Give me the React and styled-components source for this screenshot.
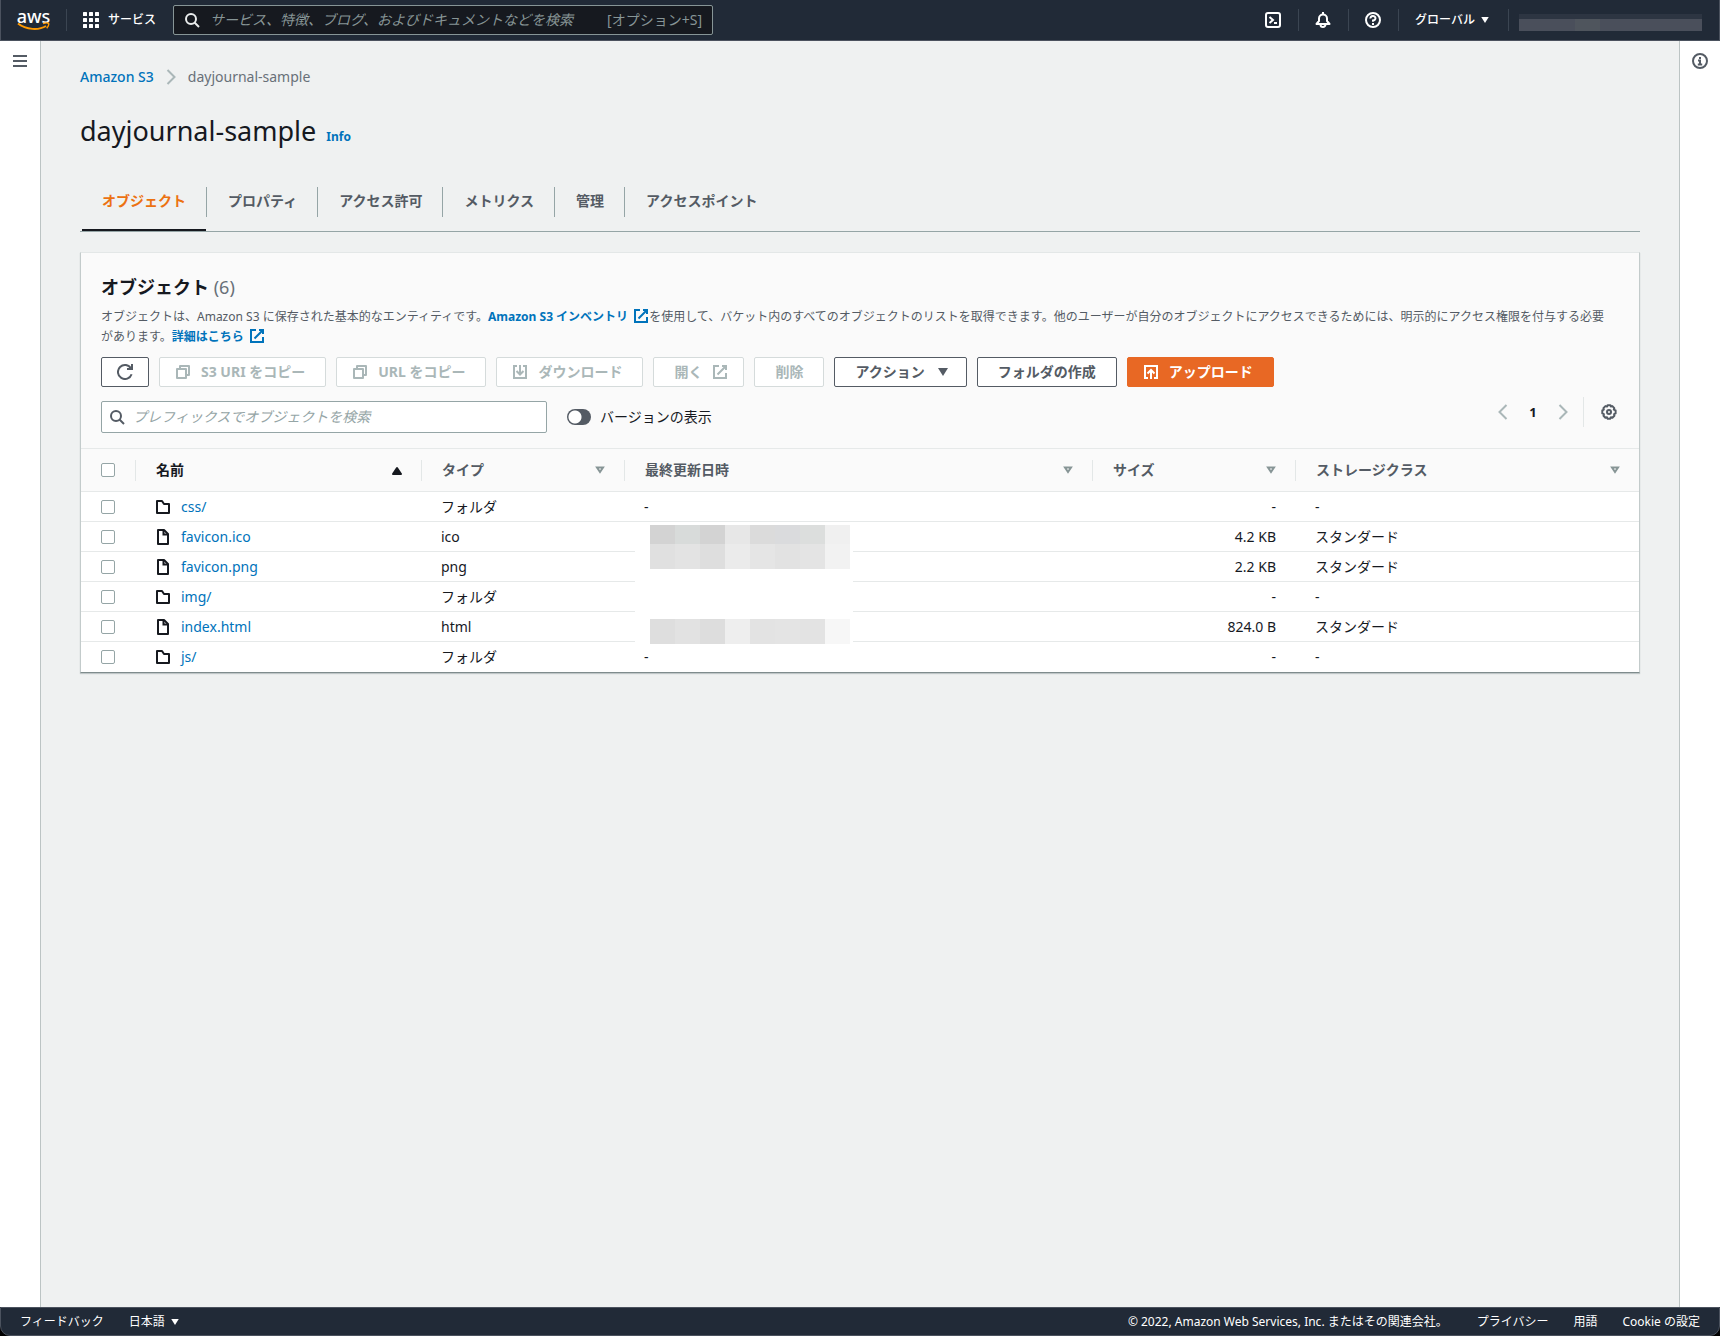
import React, { useState } from "react";
import styled, { createGlobalStyle, css } from "styled-components";

const GlobalStyle = createGlobalStyle`
  * {
    box-sizing: border-box;
  }

  body {
    margin: 0;
    background: #000;
    color: #16191f;
    font-family: "Noto Sans", "Noto Sans CJK JP", sans-serif;
    font-size: 14px;
    line-height: 20px;
  }

  button,
  input {
    font: inherit;
  }

  a {
    color: #0073bb;
    text-decoration: none;
  }
`;

const Page = styled.div`
  display: flex;
  flex-direction: column;
  min-height: 100vh;
`;

/* ---------- icons ---------- */

const Svg = styled.svg`
  flex: none;
  display: block;
  fill: none;
  stroke: currentColor;
  stroke-width: 2;
`;

const icons = {
  search: (
    <>
      <circle cx="7" cy="7" r="5" />
      <path d="M10.5 10.5 15 15" />
    </>
  ),
  shell: (
    <>
      <rect x="1" y="1" width="14" height="14" rx="2" />
      <path d="M4.5 5 8 8l-3.500 3M9 11h3" />
    </>
  ),
  bell: (
    <>
      <path d="M8 0v2M1.500 12h13L12 9V6.500a4 4 0 0 0-8 0V9z" strokeLinejoin="round" />
      <path d="M5.500 12.500a2.500 2.500 0 0 0 5 0" />
    </>
  ),
  help: (
    <>
      <circle cx="8" cy="8" r="7" />
      <path d="M5.500 6.500A2.500 2.300 0 1 1 8 8.500v1.200M8 11v2" />
    </>
  ),
  info: (
    <>
      <circle cx="8" cy="8" r="7" />
      <path d="M8 4v2M6 7.500h2V11M5.800 11.500h4.400" />
    </>
  ),
  menu: <path d="M1 3h14M1 8h14M1 13h14" />,
  chevronRight: <path d="m4.500 1 7 7-7 7" />,
  chevronLeft: <path d="m11.500 1-7 7 7 7" />,
  refresh: (
    <>
      <path d="M14.600 10.200A7 7 0 1 1 14 4.500" />
      <path d="M15 0v5h-5" />
    </>
  ),
  copy: (
    <>
      <path d="M2 5h9v9H2z" strokeLinejoin="round" />
      <path d="M5 5V2h9v9h-3" strokeLinejoin="round" />
    </>
  ),
  download: (
    <>
      <path d="M5 2H2v12h12V2h-3" />
      <path d="M8 1v9M4.500 7 8 10.500 11.500 7" />
    </>
  ),
  upload: (
    <>
      <path d="M5 14H2V2h12v12h-3" />
      <path d="M8 15V6M4.500 9.500 8 6l3.500 3.500" />
    </>
  ),
  external: (
    <>
      <path d="M7 2H2v12h12V9" />
      <path d="M10 2h4v4M5.500 10.500 14 2" />
    </>
  ),
  folder: <path d="M2 14V2h5l2 3h5v9z" strokeLinejoin="round" />,
  file: (
    <>
      <path d="M3 1h6l4 4v10H3z" strokeLinejoin="round" />
      <path d="M8.500 1v4.500H13" />
    </>
  ),
  gear: (
    <>
      <path
        d="M6.600 1.200h2.800l.6 1.300 1.400-.4 1.900 2-.5 1.500 1.800.8v3l-1.500.8.3 1.500-2 2-1.500-.5-.8 1.600H6.700l-.7-1.500-1.600.4-1.900-2 .4-1.500-1.600-.8v-3l1.500-.8-.4-1.500 2-2 1.600.5z"
        strokeLinejoin="round"
      />
      <circle cx="8" cy="8" r="2" />
    </>
  ),
  caretDown: <path d="M3 4h10l-5 8z" fill="currentColor" stroke="none" />,
  sortAsc: <path d="M4 12h8L8 6z" fill="currentColor" strokeLinejoin="round" />,
  sort: <path d="M5 5.500h6L8 10z" />,
};

const Icon = ({ name, size = 16 }) => (
  <Svg width={size} height={size} viewBox="0 0 16 16" aria-hidden="true">
    {icons[name]}
  </Svg>
);

const ServicesIcon = () => (
  <svg width="16" height="16" viewBox="0 0 16 16" fill="#fff" aria-hidden="true">
    {[0, 6, 12].map((y) =>
      [0, 6, 12].map((x) => (
        <rect key={`${x}-${y}`} x={x} y={y} width="4" height="4" rx="0.5" />
      ))
    )}
  </svg>
);

/* ---------- top navigation ---------- */

const TopNav = styled.header`
  display: flex;
  align-items: center;
  height: 41px;
  padding: 0 17px 0 16px;
  background: #212a37;
  border: 1px solid #4b525e;
  border-top: 0;
  color: #fff;
  font-size: 12px;
`;

const Logo = styled.a`
  display: flex;
  flex-direction: column;
  align-items: center;
  width: 33px;
  margin-right: 16px;
  color: #fff;
  font-size: 18px;
  font-weight: 500;
  line-height: 12px;
`;

const NavDivider = styled.span`
  flex: none;
  width: 1px;
  height: 22px;
  background: #3b4552;
`;

const NavButton = styled.button`
  display: flex;
  align-items: center;
  gap: ${({ $gap }) => $gap || 4}px;
  height: 40px;
  padding: 0 17px 0 16px;
  border: 0;
  background: none;
  color: #fff;
  font-weight: 500;
  cursor: pointer;
`;

const NavSearch = styled.label`
  display: flex;
  align-items: center;
  gap: 10px;
  width: 540px;
  height: 30px;
  padding: 0 10px;
  background: #16191f;
  border: 1px solid #879596;
  border-radius: 2px;
  color: #eaeded;
  font-size: 14px;

  span {
    color: #879596;
    white-space: nowrap;
  }
`;

const PlainInput = styled.input`
  flex: 1;
  min-width: 0;
  padding: 0;
  border: 0;
  outline: 0;
  background: none;
  color: inherit;

  &::placeholder {
    color: ${({ $hint }) => $hint};
    font-style: italic;
    opacity: 1;
  }
`;

const NavEnd = styled.div`
  display: flex;
  align-items: center;
  margin-left: auto;
`;

const AccountMask = styled.div`
  width: 183px;
  height: 17px;
  margin: 4px 0 0 10px;
  border-top: 5px solid #2d3542;
  background: linear-gradient(90deg, #4a4f5b 56px, #4f555d 56px 81px, #4a4f5b 81px);
`;

/* ---------- frame ---------- */

const Body = styled.div`
  display: flex;
  flex: 1;
`;

const Rail = styled.aside`
  flex: none;
  display: flex;
  flex-direction: column;
  align-items: center;
  width: 41px;
  padding-top: 12px;
  background: #fff;
  border: 0 solid #bcc4c4;
  border-width: ${({ $side }) => ($side === "left" ? "0 1px 0 0" : "0 0 0 1px")};
`;

const RailButton = styled.button`
  display: flex;
  padding: 0;
  border: 0;
  background: none;
  color: #545b64;
  cursor: pointer;
`;

const Main = styled.main`
  flex: 1;
  min-width: 0;
  padding: 26px 39px;
  background: #eff1f1;
`;

const Breadcrumb = styled.nav`
  display: flex;
  align-items: center;
  gap: 9px;
  color: #687078;

  a {
    font-weight: 500;
  }

  svg {
    color: #aab7b8;
  }
`;

const TitleRow = styled.div`
  display: flex;
  align-items: baseline;
  gap: 10px;
  margin-top: 26px;

  h1 {
    margin: 0;
    font-size: 27px;
    font-weight: 400;
    line-height: 36px;
  }

  a {
    font-size: 12px;
    font-weight: 700;
  }
`;

const Tabs = styled.div`
  display: flex;
  margin-top: 26px;
  padding-left: 1px;
  border-bottom: 1px solid #95a5a6;
`;

const Tab = styled.button`
  position: relative;
  height: 56px;
  padding: 0 21px 4px;
  border: 0;
  background: none;
  color: #545b64;
  font-weight: 700;
  cursor: pointer;

  &:not(:last-child)::after {
    content: "";
    position: absolute;
    top: 12px;
    right: 0;
    width: 1px;
    height: 30px;
    background: #95a5a6;
  }

  ${({ $active }) =>
    $active &&
    css`
      color: #ec7211;

      &::before {
        content: "";
        position: absolute;
        left: 1px;
        right: 1px;
        bottom: 0;
        height: 2px;
        background: #16191f;
      }
    `}
`;

/* ---------- object panel ---------- */

const Panel = styled.section`
  margin-top: 20px;
  background: #fff;
  border: 1px solid #c3cbcb;
  border-top-color: #e3e7e7;
  border-bottom-color: #7f8c8d;
  box-shadow: 0 1px 1px rgba(0, 28, 36, 0.2);
`;

const PanelHeader = styled.div`
  padding: 22px 19px 15px 20px;
  background: #fafafa;
`;

const PanelTitle = styled.h2`
  margin: 0;
  font-size: 18px;
  line-height: 24px;

  span {
    color: #687078;
    font-weight: 400;
  }
`;

const Description = styled.p`
  margin: 8px 0 0;
  padding-right: 16px;
  color: #545b64;
  font-size: 12px;

  a {
    font-weight: 700;
  }

  svg {
    display: inline-block;
    margin-left: 5px;
    vertical-align: -3px;
  }
`;

const Toolbar = styled.div`
  display: flex;
  flex-wrap: wrap;
  gap: 10px;
  margin-top: 10px;
`;

/* The side that holds an icon gets the narrower padding. */
const buttonPadding = {
  both: "0 15px",
  start: "0 20px 0 15px",
  end: "0 15px 0 20px",
  none: "0 20px",
};

const Button = styled.button`
  display: flex;
  align-items: center;
  gap: 10px;
  height: 30px;
  padding: ${({ $icon }) => buttonPadding[$icon || "none"]};
  border: 1px solid #545b64;
  border-radius: 2px;
  background: #fff;
  color: #545b64;
  font-weight: 700;
  cursor: pointer;

  &:disabled {
    border-color: #d5dbdb;
    color: #aab7b8;
    cursor: default;
  }

  ${({ $primary }) =>
    $primary &&
    css`
      border-color: #e86824;
      background: #e86824;
      color: #fff;
    `}
`;

const FilterRow = styled.div`
  display: flex;
  align-items: center;
  gap: 20px;
  margin-top: 14px;
`;

const FilterBox = styled.label`
  display: flex;
  align-items: center;
  gap: 8px;
  width: 446px;
  height: 32px;
  padding: 0 8px 0 7px;
  background: #fff;
  border: 1px solid #95a5a6;
  border-radius: 2px;
  color: #545b64;
`;

const ToggleLabel = styled.label`
  display: flex;
  align-items: center;
  gap: 9px;

  input {
    appearance: none;
    width: 24px;
    height: 16px;
    margin: 0;
    border-radius: 8px;
    background: radial-gradient(circle at 8px 8px, #fff 6px, #545b64 7px);
  }

  input:checked {
    background: radial-gradient(circle at 16px 8px, #fff 6px, #0073bb 7px);
  }
`;

const Pager = styled.div`
  display: flex;
  align-items: center;
  align-self: flex-start;
  height: 30px;
  margin: -4px 3px 0 auto;
  font-size: 13px;
  font-weight: 700;
`;

const PagerButton = styled.button`
  display: flex;
  padding: 0;
  border: 0;
  background: none;
  color: ${({ $dark }) => ($dark ? "#545b64" : "#aab7b8")};
  cursor: pointer;
`;

const PageNumber = styled.span`
  width: 44px;
  text-align: center;
`;

const PagerDivider = styled.span`
  width: 1px;
  height: 30px;
  margin: 0 17px 0 12px;
  background: #e3e7e7;
`;

const TableWrap = styled.div`
  position: relative;
`;

const Table = styled.table`
  width: 100%;
  table-layout: fixed;
  border-collapse: separate;
  border-spacing: 0;

  th {
    height: 44px;
    padding: 0;
    background: #fafafa;
    border-top: 1px solid #e6e9e9;
    border-bottom: 1px solid #e6e9e9;
    color: #545b64;
    text-align: left;
  }

  td {
    height: 30px;
    padding: 0 20px 0 19px;
    border-bottom: 1px solid #e6e9e9;
  }

  td:first-child {
    padding: 0 0 0 20px;
  }

  tbody tr:last-child td {
    border-bottom-color: transparent;
  }
`;

const HeadCell = styled.div`
  display: flex;
  align-items: center;
  justify-content: space-between;
  height: 21px;
  padding: 0 16px 0 20px;
  border-right: ${({ $last }) => ($last ? 0 : 1)}px solid #e3e7e7;
  color: ${({ $sorted }) => ($sorted ? "#16191f" : "inherit")};
`;

const SortButton = styled.button`
  display: flex;
  padding: 0;
  border: 0;
  background: none;
  color: ${({ $sorted }) => ($sorted ? "#16191f" : "#879596")};
  cursor: pointer;
`;

const Checkbox = styled.input.attrs({ type: "checkbox" })`
  appearance: none;
  display: block;
  flex: none;
  width: 14px;
  height: 14px;
  margin: 0;
  background: #fff;
  border: 1px solid #95a5a6;
  border-radius: 2px;

  &:checked {
    background: #0073bb;
    border-color: #0073bb;
  }
`;

const NameCell = styled.div`
  display: flex;
  align-items: center;
  gap: 10px;
`;

const NumberCell = styled.td`
  text-align: right;
`;

/* Hides the modified dates of the middle rows. */
const DateMask = styled.div`
  position: absolute;
  top: 77px;
  left: 554px;
  display: grid;
  grid-template-rows: 19px 25px 50px 25px;
  width: 218px;
  padding: 0 3px 0 15px;
  background: linear-gradient(transparent 19px, #fff 19px);
`;

const MaskRow = styled.div`
  display: grid;
  grid-template-columns: repeat(8, 25px);
`;

const MaskTile = styled.span`
  background: ${({ $tone }) => $tone};
`;

/* ---------- footer ---------- */

const FooterBar = styled.footer`
  display: flex;
  align-items: center;
  gap: 25px;
  height: 29px;
  padding: 0 19px;
  background: #212a37;
  border: 1px solid #4b525e;
  border-radius: 0 0 10px 10px;
  color: #fff;
  font-size: 12px;

  a {
    color: #fff;
  }
`;

const Language = styled.button`
  display: flex;
  align-items: center;
  gap: 4px;
  padding: 0;
  border: 0;
  background: none;
  color: #fff;
  cursor: pointer;
`;

const Copyright = styled.span`
  margin-left: auto;
  padding-right: 4px;
`;

const tabs = [
  "オブジェクト",
  "プロパティ",
  "アクセス許可",
  "メトリクス",
  "管理",
  "アクセスポイント",
];

const columns = [
  { label: "名前", width: 286, sorted: true },
  { label: "タイプ", width: 203 },
  { label: "最終更新日時", width: 468 },
  { label: "サイズ", width: 203 },
  { label: "ストレージクラス" },
];

const objects = [
  { name: "css/", type: "フォルダ", date: "-", size: "-", storage: "-" },
  { name: "favicon.ico", type: "ico", size: "4.2 KB", storage: "スタンダード" },
  { name: "favicon.png", type: "png", size: "2.2 KB", storage: "スタンダード" },
  { name: "img/", type: "フォルダ", size: "-", storage: "-" },
  { name: "index.html", type: "html", size: "824.0 B", storage: "スタンダード" },
  { name: "js/", type: "フォルダ", date: "-", size: "-", storage: "-" },
];

const maskRows = [
  ["#d3d3d3", "#d8dbda", "#d3d3d3", "#e7e7e7", "#dbdbdb", "#dadbdd", "#dcdedd", "#f0f0f0"],
  ["#e0e0e0", "#e3e3e3", "#dedede", "#ebebeb", "#e5e5e5", "#e2e2e2", "#e4e4e4", "#f2f2f2"],
  [],
  ["#dedede", "#e2e2e2", "#dddddd", "#eeeeee", "#e3e3e3", "#e4e4e4", "#e3e3e3", "#f7f7f7"],
];

const Header = () => (
  <TopNav>
    <Logo href="#">
      aws
      <svg width="33" height="9" viewBox="0 0 33 9" fill="none" stroke="#ff9900">
        <path d="M1 1.500C9 8 22 8.500 29 4" strokeWidth="2" />
        <path d="M26 1.500c3-.8 5-.8 5.500 0s-.3 3-1.800 4.800" strokeWidth="1.500" />
      </svg>
    </Logo>
    <NavDivider />
    <NavButton $gap={9}>
      <ServicesIcon />
      サービス
    </NavButton>
    <NavSearch>
      <Icon name="search" />
      <PlainInput
        $hint="#879596"
        aria-label="検索"
        placeholder="サービス、特徴、ブログ、およびドキュメントなどを検索"
      />
      <span>[オプション+S]</span>
    </NavSearch>
    <NavEnd>
      {["shell", "bell", "help"].map((name) => (
        <React.Fragment key={name}>
          <NavButton aria-label={name}>
            <Icon name={name} />
          </NavButton>
          <NavDivider />
        </React.Fragment>
      ))}
      <NavButton>
        グローバル
        <Icon name="caretDown" size={12} />
      </NavButton>
      <NavDivider />
      <AccountMask />
    </NavEnd>
  </TopNav>
);

const ObjectTable = () => (
  <TableWrap>
    <Table>
      <colgroup>
        <col style={{ width: 55 }} />
        {columns.map(({ label, width }) => (
          <col key={label} style={{ width }} />
        ))}
      </colgroup>
      <thead>
        <tr>
          <th>
            <HeadCell>
              <Checkbox aria-label="すべて選択" />
            </HeadCell>
          </th>
          {columns.map(({ label, sorted }, i) => (
            <th key={label}>
              <HeadCell $sorted={sorted} $last={i === columns.length - 1}>
                {label}
                <SortButton $sorted={sorted} aria-label={`${label} 並べ替え`}>
                  <Icon name={sorted ? "sortAsc" : "sort"} />
                </SortButton>
              </HeadCell>
            </th>
          ))}
        </tr>
      </thead>
      <tbody>
        {objects.map((object) => (
          <tr key={object.name}>
            <td>
              <Checkbox aria-label={object.name} />
            </td>
            <td>
              <NameCell>
                <Icon name={object.name.endsWith("/") ? "folder" : "file"} />
                <a href="#">{object.name}</a>
              </NameCell>
            </td>
            <td>{object.type}</td>
            <td>{object.date}</td>
            <NumberCell>{object.size}</NumberCell>
            <td>{object.storage}</td>
          </tr>
        ))}
      </tbody>
    </Table>
    <DateMask>
      {maskRows.map((row, i) => (
        <MaskRow key={i}>
          {row.map((tone, j) => (
            <MaskTile key={j} $tone={tone} />
          ))}
        </MaskRow>
      ))}
    </DateMask>
  </TableWrap>
);

const ObjectPanel = () => {
  const [showVersions, setShowVersions] = useState(false);

  return (
    <Panel>
      <PanelHeader>
        <PanelTitle>
          オブジェクト <span>(6)</span>
        </PanelTitle>
        <Description>
          オブジェクトは、Amazon S3 に保存された基本的なエンティティです。
          <a href="#">
            Amazon S3 インベントリ
            <Icon name="external" />
          </a>
          を使用して、バケット内のすべてのオブジェクトのリストを取得できます。他のユーザーが自分のオブジェクトにアクセスできるためには、明示的にアクセス権限を付与する必要があります。
          <a href="#">
            詳細はこちら
            <Icon name="external" />
          </a>
        </Description>
        <Toolbar>
          <Button $icon="both" aria-label="更新">
            <Icon name="refresh" />
          </Button>
          <Button disabled $icon="start">
            <Icon name="copy" />
            S3 URI をコピー
          </Button>
          <Button disabled $icon="start">
            <Icon name="copy" />
            URL をコピー
          </Button>
          <Button disabled $icon="start">
            <Icon name="download" />
            ダウンロード
          </Button>
          <Button disabled $icon="end">
            開く
            <Icon name="external" />
          </Button>
          <Button disabled>削除</Button>
          <Button $icon="end">
            アクション
            <Icon name="caretDown" />
          </Button>
          <Button>フォルダの作成</Button>
          <Button $primary $icon="start">
            <Icon name="upload" />
            アップロード
          </Button>
        </Toolbar>
        <FilterRow>
          <FilterBox>
            <Icon name="search" />
            <PlainInput
              $hint="#95a5a6"
              aria-label="オブジェクトを検索"
              placeholder="プレフィックスでオブジェクトを検索"
            />
          </FilterBox>
          <ToggleLabel>
            <input
              type="checkbox"
              role="switch"
              checked={showVersions}
              onChange={(e) => setShowVersions(e.target.checked)}
            />
            バージョンの表示
          </ToggleLabel>
          <Pager>
            <PagerButton aria-label="前のページ">
              <Icon name="chevronLeft" />
            </PagerButton>
            <PageNumber>1</PageNumber>
            <PagerButton aria-label="次のページ">
              <Icon name="chevronRight" />
            </PagerButton>
            <PagerDivider />
            <PagerButton $dark aria-label="設定">
              <Icon name="gear" />
            </PagerButton>
          </Pager>
        </FilterRow>
      </PanelHeader>
      <ObjectTable />
    </Panel>
  );
};

const Footer = () => (
  <FooterBar>
    <a href="#">フィードバック</a>
    <Language>
      日本語
      <Icon name="caretDown" size={12} />
    </Language>
    <Copyright>© 2022, Amazon Web Services, Inc. またはその関連会社。</Copyright>
    <a href="#">プライバシー</a>
    <a href="#">用語</a>
    <a href="#">Cookie の設定</a>
  </FooterBar>
);

const App = () => {
  const [activeTab, setActiveTab] = useState(tabs[0]);

  return (
    <Page>
      <GlobalStyle />
      <Header />
      <Body>
        <Rail $side="left">
          <RailButton aria-label="メニュー">
            <Icon name="menu" />
          </RailButton>
        </Rail>
        <Main>
          <Breadcrumb>
            <a href="#">Amazon S3</a>
            <Icon name="chevronRight" />
            <span>dayjournal-sample</span>
          </Breadcrumb>
          <TitleRow>
            <h1>dayjournal-sample</h1>
            <a href="#">Info</a>
          </TitleRow>
          <Tabs role="tablist">
            {tabs.map((tab) => (
              <Tab
                key={tab}
                role="tab"
                $active={tab === activeTab}
                aria-selected={tab === activeTab}
                onClick={() => setActiveTab(tab)}
              >
                {tab}
              </Tab>
            ))}
          </Tabs>
          <ObjectPanel />
        </Main>
        <Rail $side="right">
          <RailButton aria-label="情報">
            <Icon name="info" />
          </RailButton>
        </Rail>
      </Body>
      <Footer />
    </Page>
  );
};

export default App;
